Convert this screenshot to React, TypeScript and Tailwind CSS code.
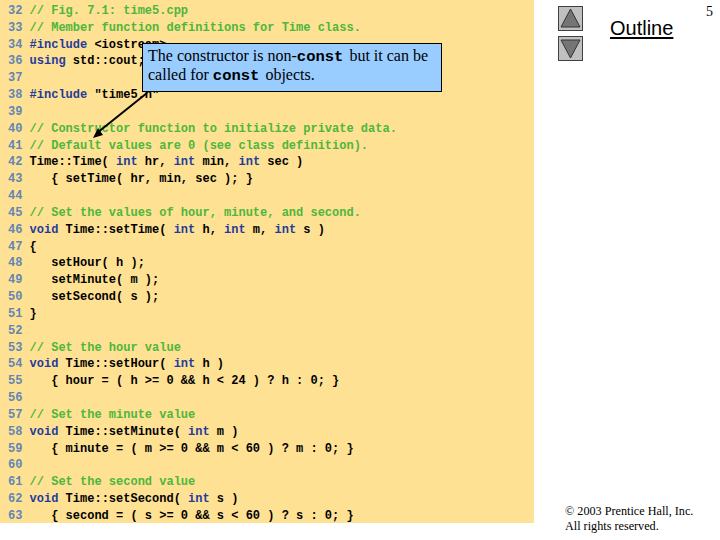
import React from "react";

type Token = [string, string];

const C = "text-[#4cb73c]";
const K = "text-[#1f3c9c]";
const T = "text-black";

const lines: { no: string; tokens: Token[] }[] = [
  { no: "32", tokens: [[C, "// Fig. 7.1: time5.cpp"]] },
  { no: "33", tokens: [[C, "// Member function definitions for Time class."]] },
  { no: "34", tokens: [[K, "#include"], [T, " <iostream>"]] },
  { no: "36", tokens: [[K, "using"], [T, " std::cout;"]] },
  { no: "37", tokens: [] },
  { no: "38", tokens: [[K, "#include"], [T, ' "time5.h"']] },
  { no: "39", tokens: [] },
  { no: "40", tokens: [[C, "// Constructor function to initialize private data."]] },
  { no: "41", tokens: [[C, "// Default values are 0 (see class definition)."]] },
  { no: "42", tokens: [[T, "Time::Time( "], [K, "int"], [T, " hr, "], [K, "int"], [T, " min, "], [K, "int"], [T, " sec )"]] },
  { no: "43", tokens: [[T, "   { setTime( hr, min, sec ); }"]] },
  { no: "44", tokens: [] },
  { no: "45", tokens: [[C, "// Set the values of hour, minute, and second."]] },
  { no: "46", tokens: [[K, "void"], [T, " Time::setTime( "], [K, "int"], [T, " h, "], [K, "int"], [T, " m, "], [K, "int"], [T, " s )"]] },
  { no: "47", tokens: [[T, "{"]] },
  { no: "48", tokens: [[T, "   setHour( h );"]] },
  { no: "49", tokens: [[T, "   setMinute( m );"]] },
  { no: "50", tokens: [[T, "   setSecond( s );"]] },
  { no: "51", tokens: [[T, "}"]] },
  { no: "52", tokens: [] },
  { no: "53", tokens: [[C, "// Set the hour value"]] },
  { no: "54", tokens: [[K, "void"], [T, " Time::setHour( "], [K, "int"], [T, " h )"]] },
  { no: "55", tokens: [[T, "   { hour = ( h >= 0 && h < 24 ) ? h : 0; }"]] },
  { no: "56", tokens: [] },
  { no: "57", tokens: [[C, "// Set the minute value"]] },
  { no: "58", tokens: [[K, "void"], [T, " Time::setMinute( "], [K, "int"], [T, " m )"]] },
  { no: "59", tokens: [[T, "   { minute = ( m >= 0 && m < 60 ) ? m : 0; }"]] },
  { no: "60", tokens: [] },
  { no: "61", tokens: [[C, "// Set the second value"]] },
  { no: "62", tokens: [[K, "void"], [T, " Time::setSecond( "], [K, "int"], [T, " s )"]] },
  { no: "63", tokens: [[T, "   { second = ( s >= 0 && s < 60 ) ? s : 0; }"]] },
];

const NavButton = ({ down }: { down?: boolean }) => (
  <div className="w-[25px] h-[25px] bg-[#c0c0c0] border border-[#404040] flex items-center justify-center">
    <svg width="21" height="21" viewBox="0 0 21 21">
      <polygon
        points={down ? "1,2 20,2 10.5,20" : "1,19 20,19 10.5,1"}
        fill="#757575"
        stroke="#333333"
        strokeWidth="1"
      />
    </svg>
  </div>
);

export default function App() {
  return (
    <div className="w-[720px] h-[540px] bg-white flex overflow-hidden">
      <div className="relative w-[534px] h-[523px] shrink-0 bg-[#ffe194] pt-[3px] pl-[8px] font-['Liberation_Mono',monospace] font-bold text-[12px] leading-[16.83px]">
        {lines.map((line) => (
          <div key={line.no} className="h-[16.83px] whitespace-pre">
            <span className="text-[#5f86b4]">{line.no} </span>
            {line.tokens.map(([color, text], i) => (
              <span key={i} className={color}>
                {text}
              </span>
            ))}
          </div>
        ))}

        <div className="absolute left-[142px] top-[43px] w-[300px] h-[49px] bg-[#99ccff] border border-black pl-[5px] pt-[2px] font-['Liberation_Serif',serif] font-normal text-[16px] leading-[19px] text-black">
          <div className="h-[19px] whitespace-pre">
            The constructor is non-
            <span className="font-['Liberation_Mono',monospace] font-bold text-[15.5px] leading-[19px] pr-[2px]">const</span> but it can be
          </div>
          <div className="h-[19px] whitespace-pre">
            called for <span className="font-['Liberation_Mono',monospace] font-bold text-[15.5px] leading-[19px] pr-[2px]">const</span> objects.
          </div>
        </div>

        <svg className="absolute left-[85px] top-[90px]" width="70" height="55" viewBox="0 0 70 55">
          <line x1="62" y1="3" x2="12" y2="43" stroke="black" strokeWidth="2" />
          <polygon points="8,48 13,38 18,45" fill="black" />
        </svg>
      </div>

      <div className="flex-1 h-[540px] flex flex-col justify-between">
        <div className="flex items-start">
          <div className="ml-[24px] mt-[6px] flex flex-col gap-[5px]">
            <NavButton />
            <NavButton down />
          </div>
          <div className="ml-[27px] mt-[16px] font-['Liberation_Sans',sans-serif] text-[20px] leading-[24px] underline decoration-2 underline-offset-2 text-black">
            Outline
          </div>
          <div className="ml-auto mr-[7px] mt-[4px] font-['Liberation_Serif',serif] text-[14px] leading-[16px] text-black">
            5
          </div>
        </div>
        <div className="ml-[31px] mb-[6px] font-['Liberation_Serif',serif] text-[12.2px] leading-[15px] text-black">
          <div>© 2003 Prentice Hall, Inc.</div>
          <div>All rights reserved.</div>
        </div>
      </div>
    </div>
  );
}
